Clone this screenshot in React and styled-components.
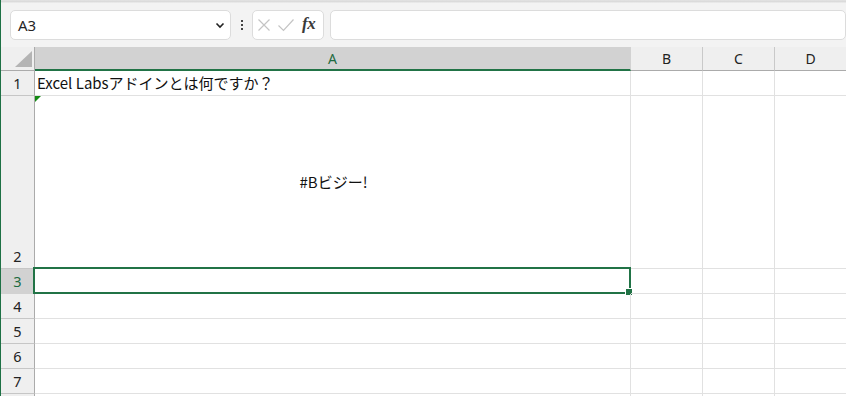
import React from 'react';
import styled, { createGlobalStyle } from 'styled-components';

const GlobalStyle = createGlobalStyle`
  html, body { margin: 0; padding: 0; background: #ffffff; }
  body { font-family: "Noto Sans", "Noto Sans CJK JP", sans-serif; }
  * { box-sizing: border-box; }
`;

const Window = styled.div`
  width: 846px;
  height: 396px;
  overflow: hidden;
  border-left: 1px solid #1e7145;
  background: #ffffff;
`;

const TopEdge = styled.div`
  height: 3px;
  background: linear-gradient(#e4e4e4, #d9d9d9 60%, #f3f3f3);
`;

const FormulaBar = styled.div`
  display: flex;
  align-items: center;
  height: 44px;
  padding: 6px 0 6px 9px;
  background: #f3f3f3;
`;

const Box = styled.div`
  display: flex;
  align-items: center;
  height: 30px;
  background: #ffffff;
  border: 1px solid #dcdcdc;
  border-radius: 5px;
  width: ${(p) => p.w || 'auto'};
  flex: ${(p) => (p.grow ? '1' : 'none')};
  margin-right: ${(p) => p.mr || '0px'};
`;

const NameText = styled.span`
  flex: 1;
  padding-left: 7px;
  font-size: 15px;
  color: #262626;
`;

const Chevron = styled.svg`
  margin-right: 5px;
`;

const Dots = styled.div`
  width: 21px;
  display: flex;
  flex-direction: column;
  align-items: center;
  gap: 2px;
  span {
    width: 2px;
    height: 2px;
    background: #444;
  }
`;

const IconBtn = styled.div`
  width: 22px;
  height: 100%;
  display: flex;
  align-items: center;
  justify-content: center;
`;

const Fx = styled.span`
  font-family: "Liberation Serif", "DejaVu Serif", serif;
  font-style: italic;
  font-weight: bold;
  font-size: 17px;
  color: #3a3a3a;
  letter-spacing: -0.3px;
  padding-left: 5px;
  padding-bottom: 2px;
`;

const Sheet = styled.div`
  display: grid;
  grid-template-columns: 34px 596px 72px 72px 72px;
`;

const Corner = styled.div`
  height: 24px;
  background: #efefef;
  border-right: 1px solid #ababab;
  border-bottom: 1px solid #ababab;
  display: flex;
  align-items: flex-end;
  justify-content: flex-end;
  padding: 0 2px 3px 0;
`;

const ColHead = styled.div`
  height: 24px;
  background: ${(p) => (p.sel ? '#d2d2d2' : '#efefef')};
  border-right: 1px solid ${(p) => (p.sel ? '#d2d2d2' : '#c9c9c9')};
  border-bottom: ${(p) => (p.sel ? '2px solid #217346' : '1px solid #ababab')};
  color: ${(p) => (p.sel ? '#1e6b41' : '#222')};
  font-size: 14px;
  display: flex;
  align-items: center;
  justify-content: center;
  padding-bottom: ${(p) => (p.sel ? '0px' : '1px')};
`;

const RowHead = styled.div`
  height: ${(p) => p.h}px;
  background: ${(p) => (p.sel ? '#d2d2d2' : '#efefef')};
  border-right: 1px solid #ababab;
  border-bottom: 1px solid ${(p) => (p.sel ? '#d2d2d2' : '#c6c6c6')};
  color: ${(p) => (p.sel ? '#1e6b41' : '#222')};
  font-size: 14.5px;
  display: flex;
  align-items: flex-end;
  justify-content: center;
  padding-bottom: 2px;
  line-height: 20px;
`;

const Cell = styled.div`
  height: ${(p) => p.h}px;
  border-right: 1px solid #e1e1e1;
  border-bottom: 1px solid #e1e1e1;
  position: relative;
  font-family: "Noto Sans CJK JP", sans-serif;
  font-size: 15px;
  color: #111;
  display: flex;
  align-items: ${(p) => (p.center ? 'center' : 'flex-end')};
  justify-content: ${(p) => (p.center ? 'center' : 'flex-start')};
  padding: 0 0 1px 2px;
  white-space: nowrap;
  line-height: 22px;
`;

const ErrorMark = styled.div`
  position: absolute;
  left: 0;
  top: 0;
  width: 0;
  height: 0;
  border-top: 6px solid #138a13;
  border-right: 6px solid transparent;
`;

const Selection = styled.div`
  position: absolute;
  left: -2px;
  top: -2px;
  right: -1px;
  bottom: -1px;
  border: 2px solid #217346;
  pointer-events: none;
`;

const FillHandle = styled.div`
  position: absolute;
  right: -4px;
  bottom: -4px;
  width: 8px;
  height: 8px;
  background: #217346;
  border: 1px solid #ffffff;
`;

const cols = ['A', 'B', 'C', 'D'];
const rows = [
  { n: 1, h: 25, text: 'Excel Labsアドインとは何ですか？' },
  { n: 2, h: 173, text: '#Bビジー!', center: true, err: true },
  { n: 3, h: 25, sel: true },
  { n: 4, h: 25 },
  { n: 5, h: 25 },
  { n: 6, h: 25 },
  { n: 7, h: 25 },
  { n: 8, h: 25, hidden: true },
];

export default function App() {
  return (
    <>
      <GlobalStyle />
      <Window>
        <TopEdge />
        <FormulaBar>
          <Box w="221px">
            <NameText>A3</NameText>
            <Chevron width="10" height="7" viewBox="0 0 10 7">
              <path d="M1.5 1.5 L5 5 L8.5 1.5" fill="none" stroke="#222" strokeWidth="1.6" />
            </Chevron>
          </Box>
          <Dots>
            <span />
            <span />
            <span />
          </Dots>
          <Box w="72px" mr="6px">
            <IconBtn>
              <svg width="14" height="14" viewBox="0 0 14 14">
                <path d="M1.5 1.5 L12.5 12.5 M12.5 1.5 L1.5 12.5" stroke="#c4c4c4" strokeWidth="1.2" fill="none" />
              </svg>
            </IconBtn>
            <IconBtn>
              <svg width="18" height="14" viewBox="0 0 18 14">
                <path d="M1.5 7.5 L6.5 12.5 L16.5 1.5" stroke="#c4c4c4" strokeWidth="1.2" fill="none" />
              </svg>
            </IconBtn>
            <Fx>fx</Fx>
          </Box>
          <Box grow />
        </FormulaBar>
        <Sheet>
          <Corner>
            <svg width="17" height="16" viewBox="0 0 17 16">
              <path d="M17 0 L17 16 L0 16 Z" fill="#b4b4b4" />
            </svg>
          </Corner>
          {cols.map((c) => (
            <ColHead key={c} sel={c === 'A'}>
              {c}
            </ColHead>
          ))}
          {rows.map((r) => (
            <React.Fragment key={r.n}>
              <RowHead h={r.h} sel={r.sel}>
                {r.hidden ? '' : r.n}
              </RowHead>
              <Cell h={r.h} center={r.center}>
                {r.err && <ErrorMark />}
                {r.text}
                {r.sel && (
                  <Selection>
                    <FillHandle />
                  </Selection>
                )}
              </Cell>
              <Cell h={r.h} />
              <Cell h={r.h} />
              <Cell h={r.h} />
            </React.Fragment>
          ))}
        </Sheet>
      </Window>
    </>
  );
}
